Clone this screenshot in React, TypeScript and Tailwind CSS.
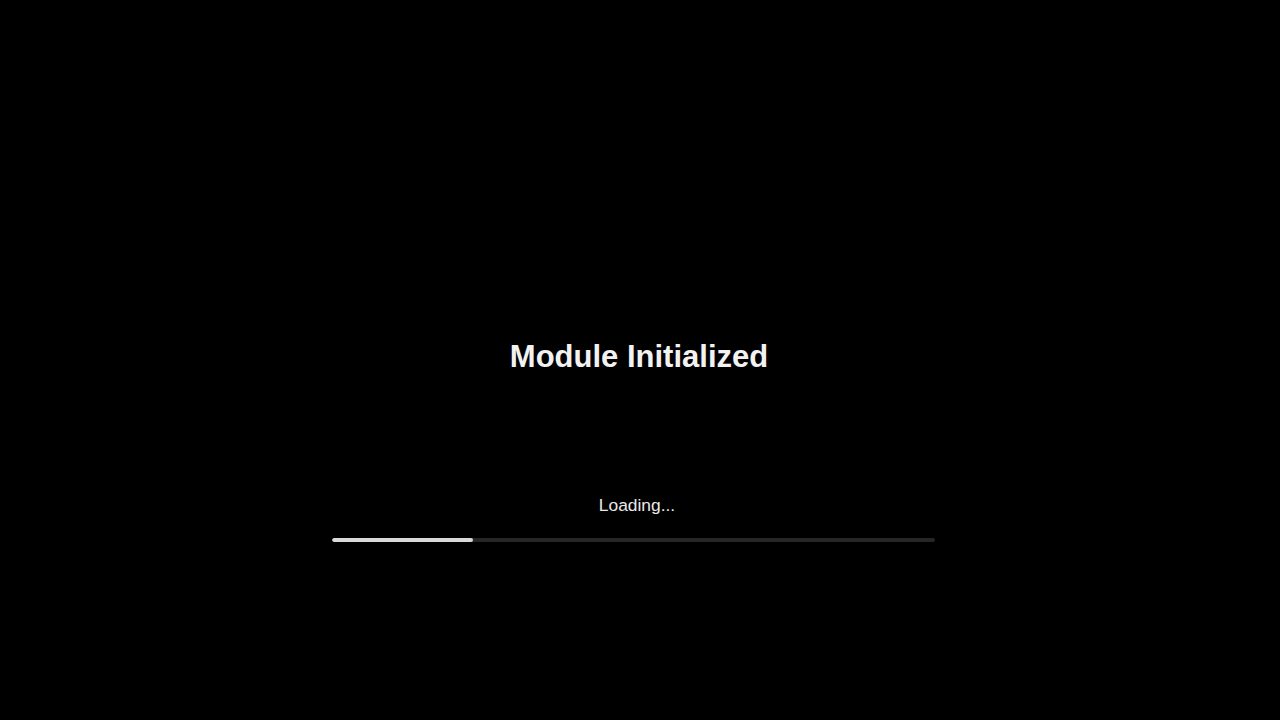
export default function App() {
  return (
    <div className="w-[1280px] h-[720px] bg-black flex flex-col items-center pt-[339px]" style={{ fontFamily: '"Liberation Sans", Arial, sans-serif' }}>
      <h1 className="text-[31px] leading-[36px] font-bold text-[#f2f2f2] mr-[2px]">Module Initialized</h1>
      <div className="mt-[118px] text-[17.4px] leading-[24px] text-[#e8e8e8] mr-[6px]">Loading...</div>
      <div className="mt-[21px] w-[603px] h-[4px] rounded-full bg-[#262626] overflow-hidden mr-[13px]">
        <div className="h-full w-[141px] bg-[#d9d9d9] rounded-full" />
      </div>
    </div>
  );
}
